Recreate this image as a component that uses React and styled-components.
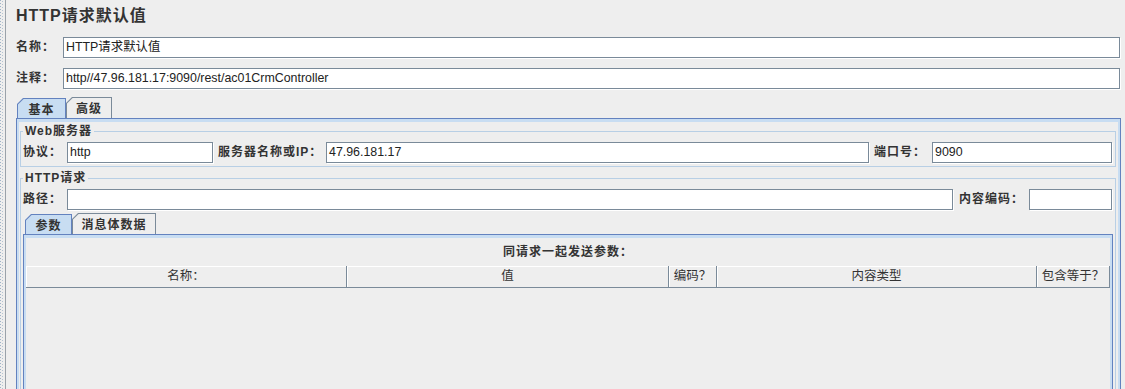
import React from 'react';
import styled, { createGlobalStyle } from 'styled-components';

const GlobalStyle = createGlobalStyle`
  html, body { margin: 0; padding: 0; background: #eeeeee; overflow: hidden; }
  body {
    font-family: "Liberation Sans", "Noto Sans CJK SC", sans-serif;
    font-size: 12px;
    color: #333333;
  }
`;

const Frame = styled.div`
  display: flex;
  height: 389px;
  overflow: hidden;
`;

const Rail = styled.div`
  flex: none;
  width: 5px;
  border-right: 1px solid #9aa2aa;
  background:
    repeating-linear-gradient(to bottom, #9fb2c6 0 1px, transparent 1px 3px) 0 0 / 1px 100% no-repeat,
    repeating-linear-gradient(to bottom, transparent 0 1px, #b4c3d2 1px 2px, transparent 2px 3px) 2px 0 / 1px 100% no-repeat;
`;

const Main = styled.div`
  flex: 1;
  min-width: 0;
  display: flex;
  flex-direction: column;
  padding: 4px 4px 0 10px;
`;

const Title = styled.div`
  font-size: 16px;
  font-weight: bold;
  line-height: 24px;
  height: 24px;
  letter-spacing: 1px;
  margin-bottom: 9px;
`;

const Row = styled.div`
  display: flex;
  align-items: center;
  height: 21px;
  margin-bottom: ${p => p.$mb ?? 0}px;
`;

const Label = styled.div`
  flex: none;
  width: ${p => p.$w}px;
  margin-left: ${p => p.$ml ?? 0}px;
  font-weight: bold;
  letter-spacing: 1px;
  white-space: nowrap;
  line-height: 21px;
`;

const Field = styled.div`
  box-sizing: border-box;
  height: 21px;
  ${p => (p.$w ? `width: ${p.$w}px; flex: none;` : 'flex: 1; min-width: 0;')}
  margin-right: ${p => p.$mr ?? 0}px;
  border: 1px solid #7a8a99;
  box-shadow: 1px 1px 0 #ffffff;
  background: #ffffff;
  padding: 0 2px;
  line-height: 19px;
  font-size: 12.4px;
  color: #222222;
  white-space: nowrap;
  overflow: hidden;
`;

const TabBar = styled.div`
  display: flex;
  align-items: flex-end;
  height: 21px;
  padding-left: ${p => p.$pl}px;
  margin-top: ${p => p.$mt ?? 0}px;
`;

const Tab = styled.div`
  position: relative;
  flex: none;
  box-sizing: border-box;
  width: ${p => p.$w}px;
  height: ${p => (p.$active ? 20 : 21)}px;
  margin-right: ${p => (p.$active ? 0 : 1)}px;
  background: ${p => (p.$active ? '#6382bf' : '#7a8a99')};
  clip-path: polygon(6px 0, 100% 0, 100% 100%, 0 100%, 0 6px);
  display: flex;
  align-items: center;
  justify-content: center;
  font-weight: bold;
  letter-spacing: 1px;
  &::before {
    content: '';
    position: absolute;
    left: 1px;
    top: 1px;
    right: 1px;
    bottom: 0;
    background: ${p => (p.$active ? '#c8ddf2' : '#eeeeee')};
    clip-path: polygon(5.6px 0, 100% 0, 100% 100%, 0 100%, 0 5.6px);
  }
  & > span {
    position: relative;
  }
`;

const TabPanel = styled.div`
  border: 1px solid #6382bf;
  box-shadow: inset 0 0 0 2px #c8ddf2, inset 0 3px 0 #c8ddf2;
  padding: ${p => p.$pad};
  ${p => (p.$h ? `height: ${p.$h}px;` : '')}
`;

const TitledBox = styled.fieldset`
  margin: ${p => p.$mt ?? 0}px 0 0 0;
  border: 1px solid #b8cfe5;
  padding: 4px 2px 3px 2px;
  min-width: 0;
`;

const Legend = styled.legend`
  padding: 0 2px;
  margin-left: 0;
  font-weight: bold;
  letter-spacing: 1px;
  line-height: 14px;
  font-size: 12px;
`;

const Caption = styled.div`
  height: 29px;
  line-height: 30px;
  text-align: center;
  font-weight: bold;
  letter-spacing: 1px;
`;

const HeaderRow = styled.div`
  display: grid;
  grid-template-columns: 321px 322px 48px 320px 1fr;
  height: 22px;
`;

const HeaderCell = styled.div`
  box-sizing: border-box;
  border-right: 1px solid #7a8a99;
  border-bottom: 1px solid #7a8a99;
  box-shadow: inset 1px 1px 0 #ffffff;
  text-align: center;
  line-height: 21px;
  font-size: 12.5px;
  white-space: nowrap;
  overflow: hidden;
  color: #333333;
`;

export default function App() {
  return (
    <>
      <GlobalStyle />
      <Frame>
        <Rail />
        <Main>
          <Title>HTTP请求默认值</Title>
          <Row $mb={10}>
            <Label $w={47}>名称：</Label>
            <Field $mr={1}>HTTP请求默认值</Field>
          </Row>
          <Row $mb={8}>
            <Label $w={47}>注释：</Label>
            <Field $mr={1}>http//47.96.181.17:9090/rest/ac01CrmController</Field>
          </Row>

          <TabBar $pl={1}>
            <Tab $active $w={49}><span>基本</span></Tab>
            <Tab $w={46}><span>高级</span></Tab>
          </TabBar>
          <TabPanel $pad="5px 4px 0 3px" $h={300}>
            <TitledBox>
              <Legend>Web服务器</Legend>
              <Row>
                <Label $w={44}>协议：</Label>
                <Field $w={146}>http</Field>
                <Label $w={108} $ml={5}>服务器名称或IP：</Label>
                <Field>47.96.181.17</Field>
                <Label $w={58} $ml={5}>端口号：</Label>
                <Field $w={180} $mr={1}>9090</Field>
              </Row>
            </TitledBox>

            <TitledBox $mt={4}>
              <Legend>HTTP请求</Legend>
              <Row>
                <Label $w={44}>路径：</Label>
                <Field></Field>
                <Label $w={70} $ml={6}>内容编码：</Label>
                <Field $w={83} $mr={1}></Field>
              </Row>
              <TabBar $pl={2} $mt={3}>
                <Tab $active $w={47}><span>参数</span></Tab>
                <Tab $w={84}><span>消息体数据</span></Tab>
              </TabBar>
              <TabPanel $pad="2px 2px 0 2px" $h={200}>
                <Caption>同请求一起发送参数：</Caption>
                <HeaderRow>
                  <HeaderCell>名称：</HeaderCell>
                  <HeaderCell>值</HeaderCell>
                  <HeaderCell>编码？</HeaderCell>
                  <HeaderCell>内容类型</HeaderCell>
                  <HeaderCell>包含等于？</HeaderCell>
                </HeaderRow>
              </TabPanel>
            </TitledBox>
          </TabPanel>
        </Main>
      </Frame>
    </>
  );
}
